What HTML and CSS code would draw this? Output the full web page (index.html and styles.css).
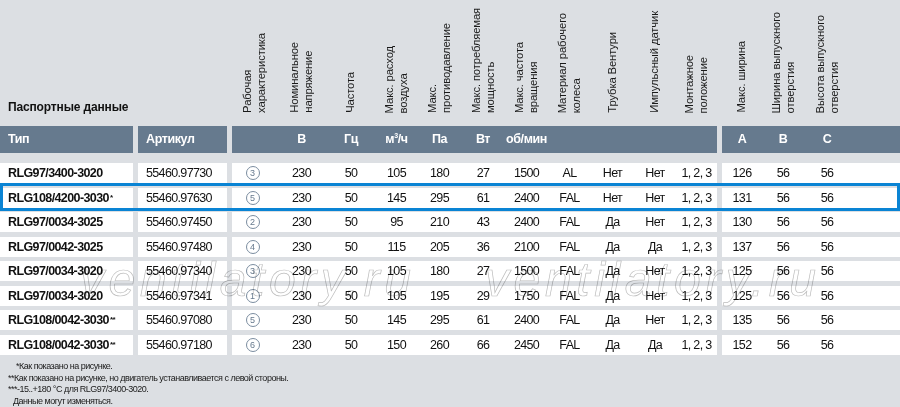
FILE: index.html
```html
<!DOCTYPE html>
<html lang="ru">
<head>
<meta charset="utf-8">
<title>Паспортные данные</title>
<link rel="stylesheet" href="styles.css">
</head>
<body>
<div class="page">
  <div class="head">
    <div class="title">Паспортные данные</div>
    <div class="g-data">
      <div class="vh"><span>Рабочая<br>характеристика</span></div>
      <div class="vh"><span>Номинальное<br>напряжение</span></div>
      <div class="vh"><span>Частота</span></div>
      <div class="vh"><span>Макс. расход<br>воздуха</span></div>
      <div class="vh"><span>Макс.<br>противодавление</span></div>
      <div class="vh"><span>Макс. потребляемая<br>мощность</span></div>
      <div class="vh"><span>Макс. частота<br>вращения</span></div>
      <div class="vh"><span>Материал рабочего<br>колеса</span></div>
      <div class="vh"><span>Трубка Вентури</span></div>
      <div class="vh"><span>Импульсный датчик</span></div>
      <div class="vh"><span>Монтажное<br>положение</span></div>
    </div>
    <div class="g-dim">
      <div class="vh"><span>Макс. ширина</span></div>
      <div class="vh"><span>Ширина выпускного<br>отверстия</span></div>
      <div class="vh"><span>Высота выпускного<br>отверстия</span></div>
    </div>
  </div>

  <div class="bar">
    <div class="c-type">Тип</div>
    <div class="c-art">Артикул</div>
    <div class="g-data">
      <div></div><div>В</div><div>Гц</div><div>м<sup>3</sup>/ч</div><div>Па</div><div>Вт</div><div>об/мин</div><div></div><div></div><div></div><div></div>
    </div>
    <div class="g-dim"><div>A</div><div>B</div><div>C</div><div></div></div>
  </div>

  <div class="rows">
    <div class="row">
      <div class="c-type">RLG97/3400-3020</div>
      <div class="c-art">55460.97730</div>
      <div class="g-data"><div><span class="ring">3</span></div><div>230</div><div>50</div><div>105</div><div>180</div><div>27</div><div>1500</div><div>AL</div><div>Нет</div><div>Нет</div><div>1, 2, 3</div></div>
      <div class="g-dim"><div>126</div><div>56</div><div>56</div><div></div></div>
    </div>
    <div class="row sel">
      <div class="c-type">RLG108/4200-3030<sup>*</sup></div>
      <div class="c-art">55460.97630</div>
      <div class="g-data"><div><span class="ring">5</span></div><div>230</div><div>50</div><div>145</div><div>295</div><div>61</div><div>2400</div><div>FAL</div><div>Нет</div><div>Нет</div><div>1, 2, 3</div></div>
      <div class="g-dim"><div>131</div><div>56</div><div>56</div><div></div></div>
    </div>
    <div class="row">
      <div class="c-type">RLG97/0034-3025</div>
      <div class="c-art">55460.97450</div>
      <div class="g-data"><div><span class="ring">2</span></div><div>230</div><div>50</div><div>95</div><div>210</div><div>43</div><div>2400</div><div>FAL</div><div>Да</div><div>Нет</div><div>1, 2, 3</div></div>
      <div class="g-dim"><div>130</div><div>56</div><div>56</div><div></div></div>
    </div>
    <div class="row">
      <div class="c-type">RLG97/0042-3025</div>
      <div class="c-art">55460.97480</div>
      <div class="g-data"><div><span class="ring">4</span></div><div>230</div><div>50</div><div>115</div><div>205</div><div>36</div><div>2100</div><div>FAL</div><div>Да</div><div>Да</div><div>1, 2, 3</div></div>
      <div class="g-dim"><div>137</div><div>56</div><div>56</div><div></div></div>
    </div>
    <div class="row">
      <div class="c-type">RLG97/0034-3020</div>
      <div class="c-art">55460.97340</div>
      <div class="g-data"><div><span class="ring">3</span></div><div>230</div><div>50</div><div>105</div><div>180</div><div>27</div><div>1500</div><div>FAL</div><div>Да</div><div>Нет</div><div>1, 2, 3</div></div>
      <div class="g-dim"><div>125</div><div>56</div><div>56</div><div></div></div>
    </div>
    <div class="row">
      <div class="c-type">RLG97/0034-3020</div>
      <div class="c-art">55460.97341</div>
      <div class="g-data"><div><span class="ring">1</span></div><div>230</div><div>50</div><div>105</div><div>195</div><div>29</div><div>1750</div><div>FAL</div><div>Да</div><div>Нет</div><div>1, 2, 3</div></div>
      <div class="g-dim"><div>125</div><div>56</div><div>56</div><div></div></div>
    </div>
    <div class="row">
      <div class="c-type">RLG108/0042-3030<sup>**</sup></div>
      <div class="c-art">55460.97080</div>
      <div class="g-data"><div><span class="ring">5</span></div><div>230</div><div>50</div><div>145</div><div>295</div><div>61</div><div>2400</div><div>FAL</div><div>Да</div><div>Нет</div><div>1, 2, 3</div></div>
      <div class="g-dim"><div>135</div><div>56</div><div>56</div><div></div></div>
    </div>
    <div class="row">
      <div class="c-type">RLG108/0042-3030<sup>**</sup></div>
      <div class="c-art">55460.97180</div>
      <div class="g-data"><div><span class="ring">6</span></div><div>230</div><div>50</div><div>150</div><div>260</div><div>66</div><div>2450</div><div>FAL</div><div>Да</div><div>Да</div><div>1, 2, 3</div></div>
      <div class="g-dim"><div>152</div><div>56</div><div>56</div><div></div></div>
    </div>
  </div>

  <div class="notes">
    <div class="n1">*Как показано на рисунке.</div>
    <div class="n2">**Как показано на рисунке, но двигатель устанавливается с левой стороны.</div>
    <div class="n3">***-15..+180 °C для RLG97/3400-3020.</div>
    <div class="n4">Данные могут изменяться.</div>
  </div>

  <div class="wm wm1">ventilatory.ru</div>
  <div class="wm wm2">ventilatory.ru</div>
</div>
</body>
</html>
```

FILE: styles.css
```css
* { box-sizing: border-box; }
html, body { margin: 0; padding: 0; }
body {
  background: #dcdfe3;
  font-family: "Liberation Sans", Arial, sans-serif;
  color: #111;
}
.page {
  position: relative;
  width: 900px;
  height: 407px;
  overflow: hidden;
}

/* shared column structure */
.head, .bar, .row {
  display: flex;
  gap: 5px;
}
.c-type { width: 133px; flex: none; padding-left: 8px; }
.c-art { width: 89px; flex: none; padding-left: 8px; }
.g-data {
  width: 485px;
  flex: none;
  display: grid;
  grid-template-columns: 44px 51px 48px 43px 43px 44px 43px 43px 43px 42px 41px;
}
.g-dim {
  flex: 1;
  display: grid;
  grid-template-columns: 40px 42px 46px 1fr;
}

/* rotated header */
.head { height: 126px; }
.head .title {
  width: 227px;
  flex: none;
  display: flex;
  align-items: flex-end;
  padding: 0 0 12px 8px;
  font-size: 12px;
  font-weight: bold;
  letter-spacing: -0.15px;
}
.vh {
  display: flex;
  align-items: flex-end;
  justify-content: center;
  padding-bottom: 13px;
}
.vh span {
  writing-mode: vertical-rl;
  transform: rotate(180deg);
  white-space: nowrap;
  font-size: 11.3px;
  line-height: 13.5px;
  letter-spacing: -0.15px;
  color: #1a1a1a;
}

/* header bar */
.bar { height: 26.5px; }
.bar > div {
  background: #667a8e;
  color: #fff;
  font-size: 12.5px;
  font-weight: bold;
  letter-spacing: -0.4px;
  display: flex;
  align-items: center;
}
.bar .g-data, .bar .g-dim { display: grid; align-items: center; }
.bar .g-data > div, .bar .g-dim > div { text-align: center; }
.bar sup { font-size: 7px; vertical-align: 5px; line-height: 0; }

/* rows */
.rows {
  margin-top: 10.5px;
  display: flex;
  flex-direction: column;
  gap: 4.5px;
}
.row {
  height: 20px;
  position: relative;
  font-size: 12.5px;
  letter-spacing: -0.65px;
}
.row > div {
  background: #fff;
  display: flex;
  align-items: center;
}
.row .g-data, .row .g-dim { display: grid; align-items: center; }
.row .g-data > div, .row .g-dim > div {
  text-align: center;
  height: 100%;
  display: flex;
  align-items: center;
  justify-content: center;
}
.row .c-type { font-weight: bold; letter-spacing: -0.6px; }
.row sup {
  font-size: 8px;
  vertical-align: 7px;
  line-height: 0;
  margin-left: 1px;
}
.row.sel::after {
  content: "";
  position: absolute;
  left: 0;
  right: 0;
  top: -4.5px;
  bottom: -3px;
  border: 3.5px solid #0a84d4;
  pointer-events: none;
}

.ring {
  display: inline-block;
  width: 14px;
  height: 14px;
  border: 1px solid #7b8da0;
  border-radius: 50%;
  font-size: 9px;
  line-height: 12px;
  text-align: center;
  color: #66798d;
  letter-spacing: 0;
  margin-right: 3px;
}

/* footnotes */
.notes {
  margin-top: 6.5px;
  font-size: 9px;
  line-height: 11.5px;
  letter-spacing: -0.5px;
  color: #1a1a1a;
}
.notes .n1 { padding-left: 16px; }
.notes .n2 { padding-left: 8px; }
.notes .n3 { padding-left: 8px; }
.notes .n4 { padding-left: 13px; }

/* watermark */
.wm {
  position: absolute;
  top: 256px;
  font-family: "Liberation Sans", Arial, sans-serif;
  font-style: italic;
  font-size: 48px;
  line-height: 48px;
  letter-spacing: 4.6px;
  color: transparent;
  -webkit-text-stroke: 0.7px #bdbdbd;
  mix-blend-mode: multiply;
  white-space: nowrap;
  pointer-events: none;
}
.wm1 { left: 80px; }
.wm2 { left: 485px; }
```
